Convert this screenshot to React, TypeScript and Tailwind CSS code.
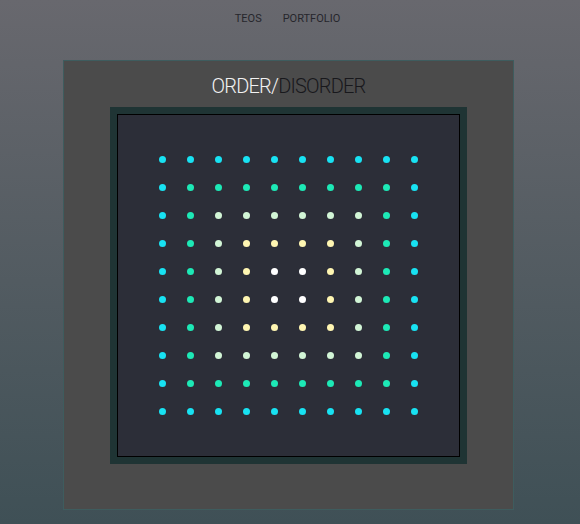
const colors = ["#18e2f2", "#1de9b6", "#d2f5d6", "#fff6b2", "#ffffff"];

function dotColor(r: number, c: number) {
  // ring index: distance from the nearest edge of the 10x10 grid
  const ring = Math.min(r, c, 9 - r, 9 - c);
  return colors[ring];
}

export default function App() {
  const cells = [];
  for (let r = 0; r < 10; r++) {
    for (let c = 0; c < 10; c++) {
      cells.push(
        <div
          key={`${r}-${c}`}
          className="w-[7px] h-[7px] rounded-full"
          style={{ backgroundColor: dotColor(r, c) }}
        />
      );
    }
  }

  return (
    <div
      className="min-h-[524px] w-full bg-gradient-to-b from-[#68686e] to-[#3f5056]"
      style={{ fontFamily: "Roboto, 'Liberation Sans', sans-serif" }}
    >
      <nav className="h-[38px] flex items-center justify-center gap-[21px] pr-[5px] text-[11px] text-[#26262c]">
        <a href="#">TEOS</a>
        <a href="#">PORTFOLIO</a>
      </nav>

      <div className="mt-[22px] ml-[63px] w-[451px] border border-[#3e5c5e] bg-[#4b4b4b] pb-[45px]">
        <h1 className="h-[46px] pt-[3px] flex items-center justify-center text-[20px] font-light tracking-[-0.8px]">
          <span className="text-[#f2f2f2]">ORDER/</span>
          <span className="text-[#18181c]">DISORDER</span>
        </h1>
        <div className="mx-auto w-[357px] h-[357px] border-[7px] border-[#1f3434]">
          <div className="w-full h-full border border-black bg-[#2c2e38] flex items-center justify-center">
            <div className="grid grid-cols-10 gap-[21px]">{cells}</div>
          </div>
        </div>
      </div>
    </div>
  );
}
